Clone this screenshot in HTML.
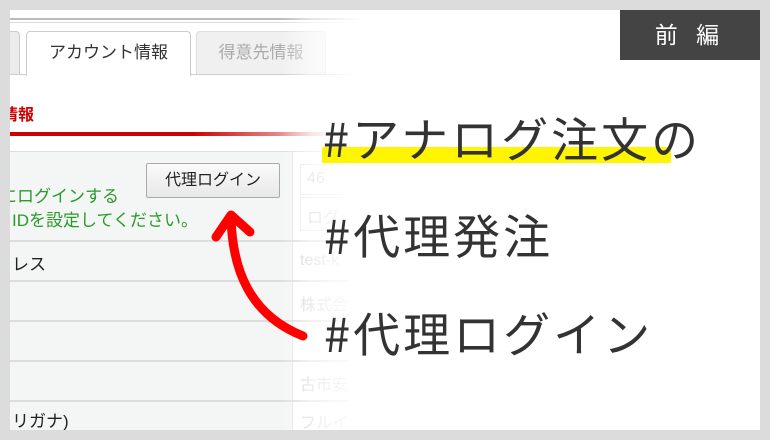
<!DOCTYPE html>
<html><head><meta charset="utf-8"><style>
*{margin:0;padding:0;box-sizing:border-box}
body{width:770px;height:440px;background:#dcdcdc;position:relative;overflow:hidden;font-family:"Liberation Sans","Noto Sans CJK JP",sans-serif}
#c{position:absolute;left:10px;top:10px;width:750px;height:420px;background:#fff;overflow:hidden}
.a{position:absolute;white-space:nowrap}
.big{position:absolute;font-family:"Noto Sans CJK JP",sans-serif;font-weight:400;font-size:47px;color:#333;letter-spacing:3px;line-height:1;white-space:nowrap}
.g{color:#ccc;font-size:15px}
</style></head><body>
<div id="c">
 <div class="a" style="left:0;top:8px;width:750px;height:2px;background:#bbb"></div>
 <div class="a" style="left:0;top:12px;width:750px;height:1px;background:#ddd"></div>
 <div class="a" style="left:-10px;top:21px;width:20px;height:44px;background:#ebebeb;border:1px solid #ccc;border-radius:4px 4px 0 0"></div>
 <div class="a" style="left:16px;top:21px;width:165px;height:45px;background:#fff;border:1px solid #ccc;border-bottom:none;border-radius:4px 4px 0 0;font-size:17px;color:#333;text-align:center;line-height:42px">アカウント情報</div>
 <div class="a" style="left:186px;top:21px;width:130px;height:44px;background:#f0f0f0;border:1px solid #ddd;border-radius:4px 4px 0 0;font-size:17px;color:#aaa;text-align:center;line-height:42px">得意先情報</div>
 <div class="a" style="left:0;top:64px;width:16px;height:1px;background:#ccc"></div>
 <div class="a" style="left:181px;top:64px;width:160px;height:1px;background:#ccc"></div>
 <div class="a" style="left:-24px;top:91px;font-size:16px;font-weight:bold;color:#c00">報情報</div>
 <div class="a" style="left:0;top:122px;width:330px;height:4px;background:linear-gradient(90deg,#c00 0%,#c00 55%,rgba(204,0,0,0.1) 100%)"></div>
 <div class="a" style="left:0;top:141px;width:340px;height:1px;background:#ddd"></div>
 <div class="a" style="left:0;top:142px;width:282px;height:280px;background:#f4f5f5"></div>
 <div class="a" style="left:282px;top:142px;width:1px;height:280px;background:#e6e6e6"></div>
 <div class="a" style="left:136px;top:153px;width:134px;height:35px;border:1px solid #aaa;border-radius:2px;background:linear-gradient(#fafafa,#e8e8e8);font-size:16px;color:#222;text-align:center;line-height:33px">代理ログイン</div>
 <div class="a" style="left:-10px;top:172px;font-size:17px;color:#2a9a2a">にログインする</div>
 <div class="a" style="left:2px;top:196px;font-size:17px;color:#2a9a2a">IDを設定してください。</div>
 <div class="a" style="left:290px;top:154px;width:60px;height:31px;border:1px solid #e5e5e5"></div>
 <div class="a g" style="left:297px;top:160px;font-size:16px">46</div>
 <div class="a" style="left:290px;top:187px;width:60px;height:34px;border:1px solid #e5e5e5"></div>
 <div class="a g" style="left:297px;top:194px;font-size:16px">ログ</div>
 <div class="a" style="left:0;top:230px;width:340px;height:2px;background:#ddd"></div>
 <div class="a" style="left:0;top:270px;width:340px;height:2px;background:#ddd"></div>
 <div class="a" style="left:0;top:310px;width:340px;height:2px;background:#ddd"></div>
 <div class="a" style="left:0;top:350px;width:340px;height:2px;background:#ddd"></div>
 <div class="a" style="left:0;top:390px;width:340px;height:2px;background:#ddd"></div>
 <div class="a" style="left:2px;top:240px;font-size:17px;color:#222">レス</div>
 <div class="a" style="left:2px;top:397px;font-size:17px;color:#222">リガナ)</div>
 <div class="a g" style="left:290px;top:242px;font-size:16px">test-k</div>
 <div class="a g" style="left:290px;top:281px;font-size:16px">株式会</div>
 <div class="a g" style="left:290px;top:361px;font-size:16px">古市安</div>
 <div class="a g" style="left:290px;top:399px;font-size:16px">フルイ</div>
 <div class="a" style="left:270px;top:0;width:80px;height:420px;background:linear-gradient(90deg,rgba(255,255,255,0),rgba(255,255,255,0.6) 40%,#fff)"></div>
 <div class="a" style="left:350px;top:0;width:400px;height:420px;background:#fff"></div>
 <div class="a" style="left:610px;top:0;width:140px;height:50px;background:#444;color:#fff;font-size:23px;text-align:center;line-height:50px;letter-spacing:6px">前 編</div>
 <div class="a" style="left:312px;top:137px;width:349px;height:16px;background:#fff500"></div>
 <div class="big" style="left:313px;top:103px">#アナログ注文の</div>
 <div class="big" style="left:314px;top:200px">#代理発注</div>
 <div class="big" style="left:314px;top:298px">#代理ログイン</div>
 <svg class="a" style="left:0;top:0" width="750" height="420">
  <g fill="none" stroke="#f00" stroke-width="9" stroke-linecap="round" stroke-linejoin="round">
   <path d="M221,206 C222,260 240,305 293,326"/>
   <path d="M206,227 L221,205 L240,222"/>
  </g>
 </svg>
</div>
</body></html>
